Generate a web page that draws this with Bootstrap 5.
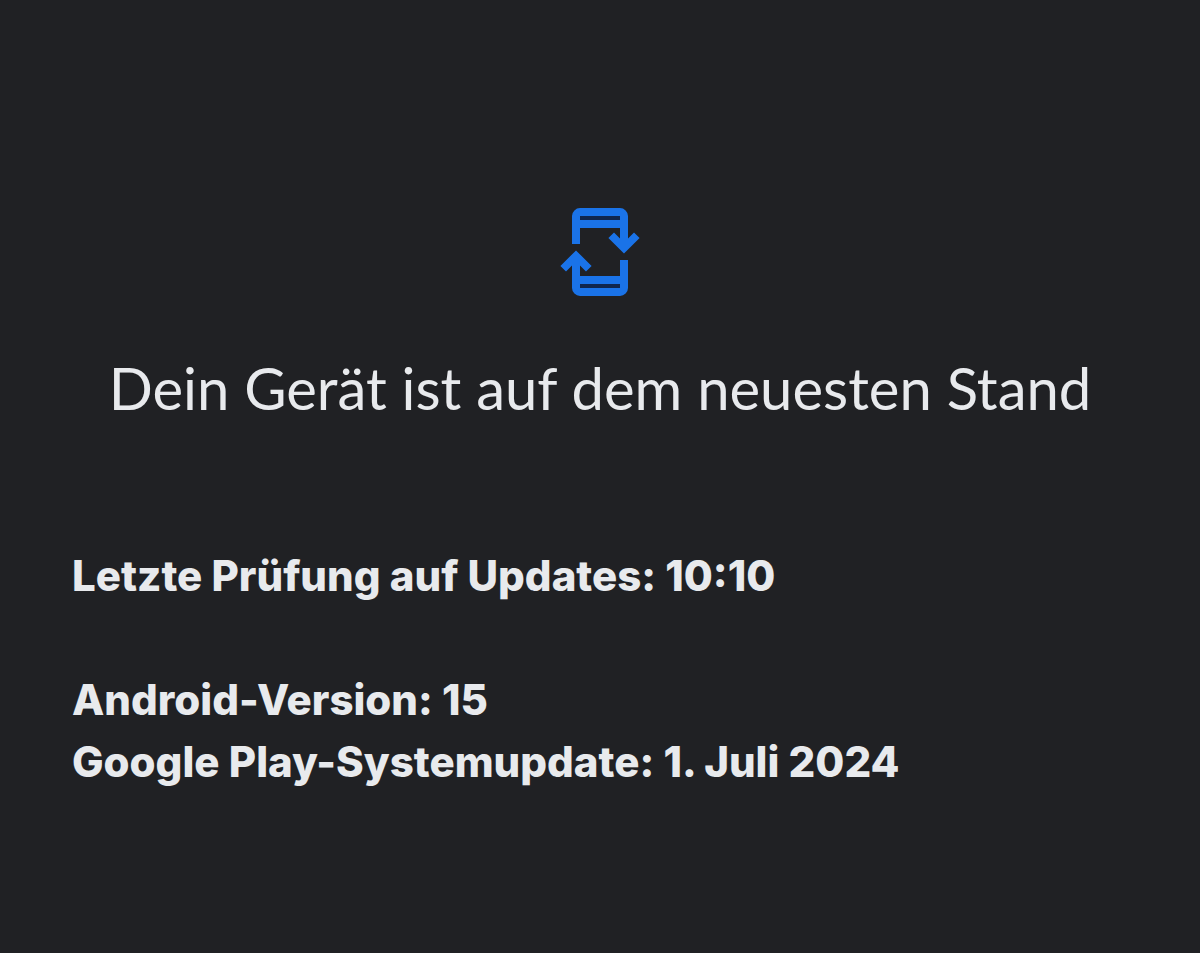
<!DOCTYPE html>
<html lang="de">
<head>
<meta charset="utf-8">
<meta name="viewport" content="width=device-width, initial-scale=1">
<title>Systemupdate</title>
<link href="https://cdn.jsdelivr.net/npm/bootstrap@5.3.0/dist/css/bootstrap.min.css" rel="stylesheet">
<style>
body { background: #202124; color: #e8eaed; font-family: Inter, sans-serif; }
.update-page { padding: 204px 72px 40px; }
.update-icon { width: 96px; height: 96px; color: #1a73e8; }
.update-title { margin: 46px 0 0; font-family: Lato, sans-serif; font-size: 58px; line-height: 84px; font-weight: 400; }
.update-info { margin-top: 115px; font-size: 42px; line-height: 62px; font-weight: 800; }
.update-check { margin-bottom: 62px; }
</style>
</head>
<body>
<main class="update-page d-flex flex-column min-vh-100">
<svg class="update-icon align-self-center" viewBox="0 0 24 24" fill="currentColor" aria-hidden="true">
<path fill="#10264d" d="M7 3h10v1H7zM7 20h10v1H7z"/>
<path d="M5 10V3q0-.8.6-1.4T7 1h10q.8 0 1.4.6T19 3v5.600l1.500-1.500 1.400 1.400-3.900 3.900-3.900-3.900 1.400-1.400L17 8.600V6H7v4zM7 4h10V3H7z"/>
<path d="M19 14v7q0 .8-.6 1.400T17 23H7q-.8 0-1.400-.6T5 21v-5.600l-1.500 1.500-1.400-1.400L6 11.600l3.900 3.900-1.400 1.400L7 15.400V18h10v-4zM17 20H7v1h10z"/>
</svg>
<h1 class="update-title text-center">Dein Gerät ist auf dem neuesten Stand</h1>
<section class="update-info">
<p class="update-check">Letzte Prüfung auf Updates: 10:10</p>
<p class="mb-0">Android-Version: 15</p>
<p class="mb-0">Google Play-Systemupdate: 1. Juli 2024</p>
</section>
</main>
<script src="https://cdn.jsdelivr.net/npm/bootstrap@5.3.0/dist/js/bootstrap.bundle.min.js"></script>
</body>
</html>
